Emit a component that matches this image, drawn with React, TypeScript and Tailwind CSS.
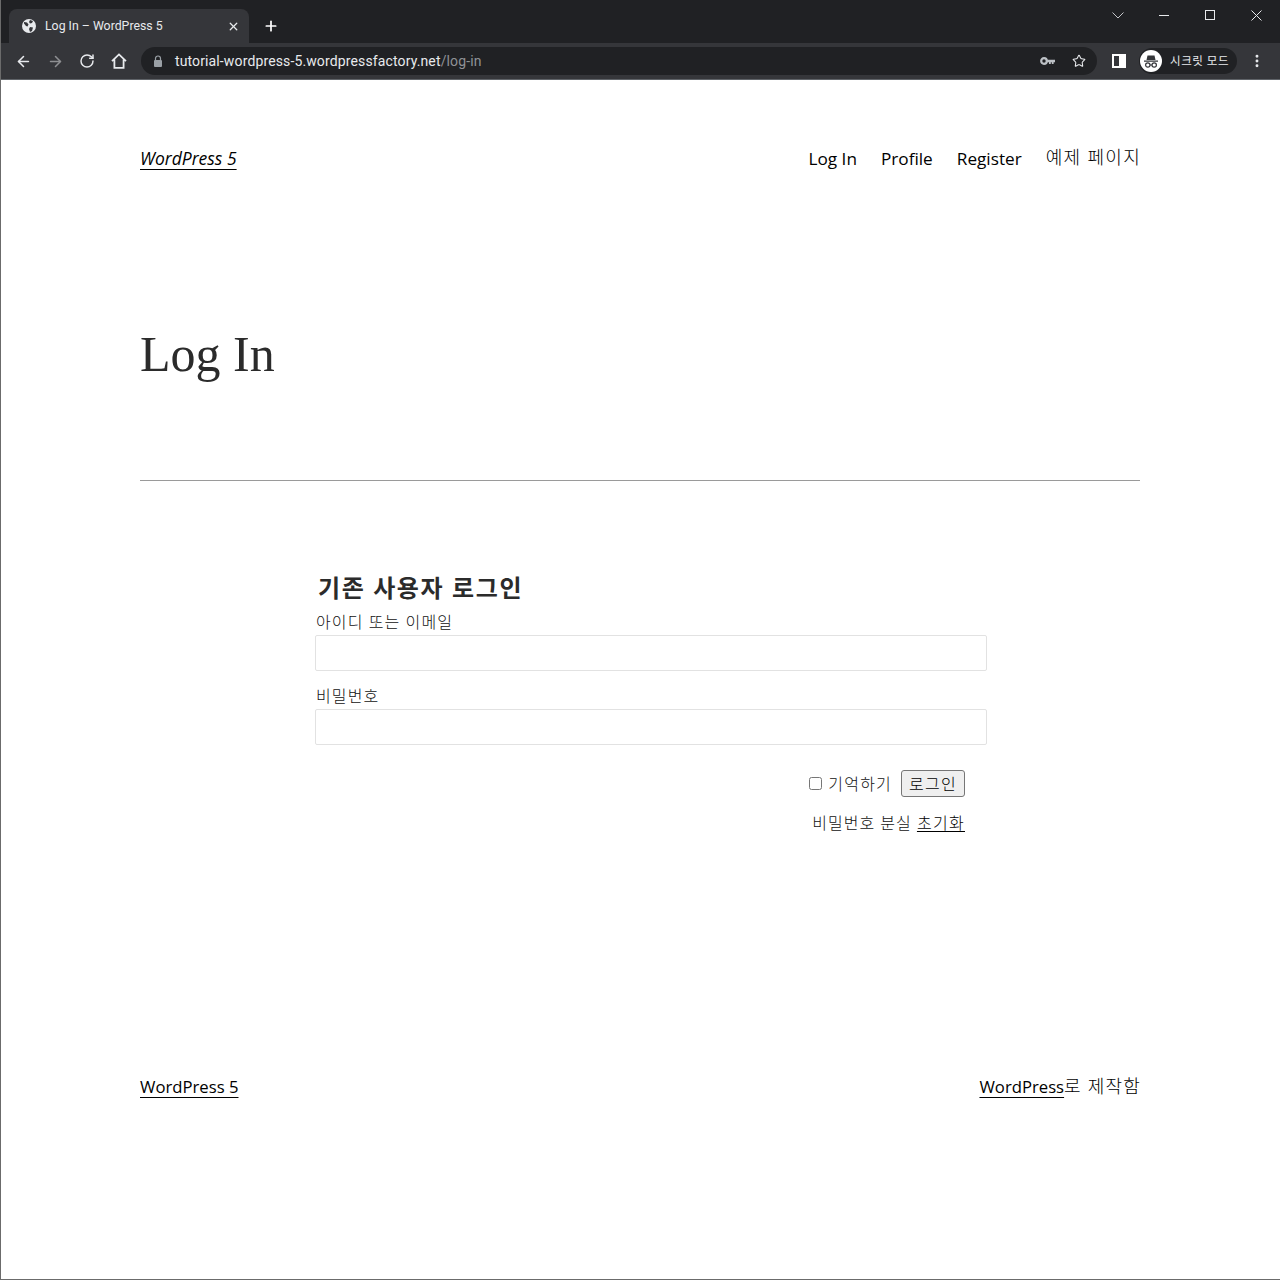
import { ArrowLeft, ArrowRight, RotateCw, Star, X, Plus, EllipsisVertical } from "lucide-react";

const sans = "font-['Open_Sans','Noto_Sans_CJK_KR',sans-serif]";

function Incognito() {
  return (
    <svg width="22" height="22" viewBox="0 0 22 22">
      <circle cx="11" cy="11" r="11" fill="#fff" />
      <path d="M4 10.5h14v1.2H4zM6.5 10l1-4.5h7l1 4.5z" fill="#35363a" />
      <circle cx="7.8" cy="15" r="2.2" fill="none" stroke="#35363a" strokeWidth="1.2" />
      <circle cx="14.2" cy="15" r="2.2" fill="none" stroke="#35363a" strokeWidth="1.2" />
      <path d="M10 15h2" stroke="#35363a" strokeWidth="1.2" />
    </svg>
  );
}

function Globe() {
  return (
    <svg width="14" height="14" viewBox="0 0 14 14">
      <circle cx="7" cy="7" r="7" fill="#e8eaed" />
      <path d="M2 3l3 .5 1.5 2-1 2-1.5-.5-2-2.5zM8 1l3 1-1 2-2 .5-1-1.5zM8 8l3 .5-1 3.5-2 1-1-3z" fill="#35363a" />
    </svg>
  );
}

function HomeIcon() {
  return (
    <svg width="16" height="16" viewBox="0 0 16 16" fill="none" stroke="#e8eaed" strokeWidth="1.8" className="ml-[16px]">
      <path d="M1 8.2 8 1.4l7 6.8M3.4 6.5v8.4h9.2V6.5" />
    </svg>
  );
}

function LockIcon() {
  return (
    <svg width="10" height="12" viewBox="0 0 10 12">
      <path d="M2.5 5V3.5a2.5 2.5 0 0 1 5 0V5" fill="none" stroke="#9aa0a6" strokeWidth="1.2" />
      <rect x="1" y="5" width="8" height="7" rx="1" fill="#9aa0a6" />
    </svg>
  );
}

function KeyIcon() {
  return (
    <svg width="15" height="8" viewBox="0 0 15 8">
      <circle cx="4" cy="4" r="2.8" fill="none" stroke="#bdc1c6" strokeWidth="2.2" />
      <path d="M7 2.8h8v2.4h-1.4V7h-1.8V5.2h-1V7H9V5.2H7z" fill="#bdc1c6" />
    </svg>
  );
}

function WindowControls() {
  return (
    <div className="flex-1 self-start flex items-center justify-end h-[30px]">
      <svg width="12" height="7" viewBox="0 0 12 7" fill="none" stroke="#c4c6c9" className="mr-[35px]">
        <path d="M.5.5 6 6l5.5-5.5" />
      </svg>
      <div className="w-[10px] h-px bg-[#e8eaed] mr-[36px]" />
      <div className="w-[10px] h-[10px] border border-[#e8eaed] mr-[36px]" />
      <svg width="11" height="11" viewBox="0 0 11 11" stroke="#e8eaed" className="mr-[18px]">
        <path d="M.5.5l10 10M10.5.5l-10 10" />
      </svg>
    </div>
  );
}

function Browser() {
  return (
    <div className={`${sans} shrink-0 h-20 flex flex-col bg-[#202124] border-b border-[#5f6368]`}>
      <div className="h-[43px] flex items-end pl-[8px]">
        <div className="w-[240px] h-[34px] bg-[#35363a] rounded-t-lg flex items-center pl-[13px] pr-[9px]">
          <Globe />
          <span className="ml-[9px] flex-1 text-[12.3px] text-[#e8eaed] font-['Roboto',sans-serif]">Log In – WordPress 5</span>
          <X size={13} strokeWidth={2.4} className="text-[#e8eaed]" />
        </div>
        <Plus size={16} strokeWidth={2.6} className="text-white ml-[14px] mb-[9px]" />
        <WindowControls />
      </div>
      <div className="flex-1 bg-[#35363a] flex items-center pl-[14px] pr-[15px] text-[#e8eaed]">
        <ArrowLeft size={17} strokeWidth={2.2} />
        <ArrowRight size={17} strokeWidth={2.2} className="ml-[15px] text-[#8e8f92]" />
        <RotateCw size={16} strokeWidth={2.2} className="ml-[15px]" />
        <HomeIcon />
        <div className="ml-[14px] w-[957px] h-[28px] rounded-full bg-[#202124] flex items-center pl-[12px] pr-[11px]">
          <LockIcon />
          <span className="ml-[12px] flex-1 text-[14px] tracking-[0.13px] font-['Roboto',sans-serif]">
            tutorial-wordpress-5.wordpressfactory.net<span className="text-[#8f9296]">/log-in</span>
          </span>
          <KeyIcon />
          <Star size={14} strokeWidth={1.8} className="ml-[17px]" />
        </div>
        <div className="ml-[15px] w-[14px] h-[14px] border-[2px] border-r-[7px] border-white" />
        <div className="ml-[13px] w-[98px] h-[26px] rounded-full bg-[#202124] flex items-center pl-[1px]">
          <Incognito />
          <span className="ml-[8px] text-[11.5px] tracking-[0.5px] text-[#e8eaed]">시크릿 모드</span>
        </div>
        <EllipsisVertical size={16} strokeWidth={2.4} className="ml-[12px]" />
      </div>
    </div>
  );
}

export default function App() {
  return (
    <div className={`${sans} w-[1280px] h-[1280px] bg-white flex flex-col border-l border-b border-[#6b6b6b] overflow-hidden`}>
      <Browser />
      <div className="w-[1000px] ml-[139px] flex-1 text-[#111111]">
        <header className="mt-[65px] h-[26px] flex items-center justify-between text-black text-[17.2px]">
          <a className="italic text-[17.5px] underline underline-offset-4">WordPress 5</a>
          <nav className="flex gap-6 items-center mt-[2px]">
            <a className="-mr-px">Log In</a>
            <a className="ml-px">Profile</a>
            <a>Register</a>
            <a className="-mt-1 -mr-px text-[18px] font-light tracking-[1.3px]">예제 페이지</a>
          </nav>
        </header>
        <h1 className="mt-[153px] h-[60px] text-[50px] leading-[60px] font-light font-['Liberation_Serif',serif] text-[#2b2b2b]">Log In</h1>
        <div className="mt-[96px] h-px bg-[#9a9a9a]" />
        <div className="mt-[92px] ml-[175px] w-[672px]">
          <h2 className="ml-[3px] h-[30px] text-[24px] leading-[30px] font-bold tracking-[1.6px] text-[#2b2b2b]">기존 사용자 로그인</h2>
          <label className="block mt-[8px] ml-px h-[22px] text-[16px] leading-[22px] font-light tracking-[1.1px]">아이디 또는 이메일</label>
          <input className="block mt-[2px] w-full h-9 border border-[#e2e2e2] rounded-[2px]" />
          <label className="block mt-[14px] ml-px h-[22px] text-[16px] leading-[22px] font-light tracking-[1.1px]">비밀번호</label>
          <input className="block mt-[2px] w-full h-9 border border-[#e2e2e2] rounded-[2px]" />
          <div className="mt-[25px] mr-[22px] flex justify-end items-center h-[27px] text-[16px]">
            <input type="checkbox" className="w-[13px] h-[13px]" />
            <span className="ml-[6px] mr-[-1px] font-light tracking-[1.2px]">기억하기</span>
            <button className="ml-[10px] h-[27px] w-[64px] bg-[#efefef] border border-[#767676] rounded-[3px] text-black font-light tracking-[1.3px]">로그인</button>
          </div>
          <div className="mt-[15px] mr-[22px] text-right text-[16px] leading-[22px] font-light tracking-[1px]">
            비밀번호 분실 <a className="underline underline-offset-2 text-black tracking-[1.3px]">초기화</a>
          </div>
        </div>
        <footer className="mt-[239px] flex justify-between items-center text-[16.7px] text-black">
          <a className="underline underline-offset-4">WordPress 5</a>
          <span className="-mr-px"><a className="underline underline-offset-4">WordPress</a><span className="text-[18px] font-light tracking-[1.2px]">로 제작함</span></span>
        </footer>
      </div>
    </div>
  );
}
